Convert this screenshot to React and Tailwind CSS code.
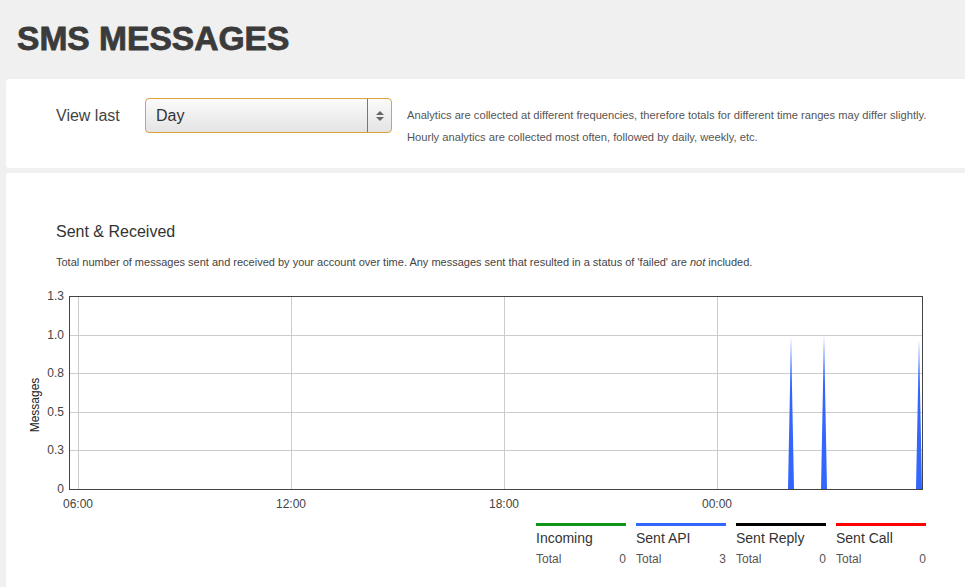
import React from "react";

const yTicks = [
    { label: "1.3", y: 11 },
    { label: "1.0", y: 50 },
    { label: "0.8", y: 88 },
    { label: "0.5", y: 127 },
    { label: "0.3", y: 165 },
    { label: "0", y: 204 },
];

const xTicks = [
    { label: "06:00", x: 72 },
    { label: "12:00", x: 285 },
    { label: "18:00", x: 498 },
    { label: "00:00", x: 711 },
];

const spikes = [
    { x: 785, top: 52 },
    { x: 818, top: 50 },
    { x: 913, top: 55 },
];

const series = [
    { name: "Incoming", color: "bg-[#109618]", total: 0 },
    { name: "Sent API", color: "bg-[#3366ff]", total: 3 },
    { name: "Sent Reply", color: "bg-black", total: 0 },
    { name: "Sent Call", color: "bg-[#ff0000]", total: 0 },
];

const Chart = () => (
    <svg width="940" height="230" className="block" fontFamily="'Liberation Sans', Arial, sans-serif">
        <rect x="63" y="11" width="853" height="193" fill="#fff" />
        {yTicks.slice(1, 5).map((t) => (
            <line key={t.label} x1="63" x2="916" y1={t.y + 0.5} y2={t.y + 0.5} stroke="#cccccc" strokeWidth="1" />
        ))}
        {xTicks.map((t) => (
            <line key={t.label} x1={t.x + 0.5} x2={t.x + 0.5} y1="11" y2="204" stroke="#cccccc" strokeWidth="1" />
        ))}
        {spikes.map((s) => (
            <polygon key={s.x} points={`${s.x - 3},204 ${s.x},${s.top} ${s.x + 3},204`} fill="#3366ff" />
        ))}
        <rect x="63.5" y="11.5" width="853" height="193" fill="none" stroke="#444" strokeWidth="1" />
        {yTicks.map((t) => (
            <text key={t.label} x="58" y={t.y + 1} textAnchor="end" dominantBaseline="middle" fontSize="12" fill="#444">
                {t.label}
            </text>
        ))}
        {xTicks.map((t) => (
            <text key={t.label} x={t.x} y="220" textAnchor="middle" dominantBaseline="middle" fontSize="12" fill="#444">
                {t.label}
            </text>
        ))}
        <text x="30" y="120" transform="rotate(-90 30 120)" textAnchor="middle" dominantBaseline="middle" fontSize="12" fill="#222">
            Messages
        </text>
    </svg>
);

const App = () => {
    return (
        <div className="min-h-[587px] bg-[#f0f0f0] font-['Liberation_Sans',Arial,sans-serif] overflow-hidden">
            <h1 className="pl-[17px] pt-[22px] pb-[23px] text-[33.6px] leading-[34px] font-bold text-[#3b3b3b] [-webkit-text-stroke:0.8px_#3b3b3b]">
                SMS MESSAGES
            </h1>

            <section className="ml-[6px] h-[89px] bg-white rounded-l-[3px] flex items-start pl-[50px] pt-[19px]">
                <div className="w-[89px] h-[35px] flex items-center text-[16px] text-[#444]">View last</div>
                <div className="w-[247px] h-[35px] rounded-[4px] border border-[#dda23c] bg-gradient-to-b from-[#fbfbfb] to-[#e4e4e4] flex items-center">
                    <span className="flex-1 pl-[10px] text-[16px] text-[#333]">Day</span>
                    <span className="w-[24px] h-full border-l border-[#777] flex flex-col items-center justify-center gap-[2px]">
                        <span className="w-0 h-0 border-l-[4px] border-r-[4px] border-b-[4px] border-l-transparent border-r-transparent border-b-[#666]" />
                        <span className="w-0 h-0 border-l-[4px] border-r-[4px] border-t-[4px] border-l-transparent border-r-transparent border-t-[#666]" />
                    </span>
                </div>
                <div className="ml-[15px] mt-[6px] text-[11.15px] leading-[22px] text-[#555]">
                    <p>Analytics are collected at different frequencies, therefore totals for different time ranges may differ slightly.</p>
                    <p>Hourly analytics are collected most often, followed by daily, weekly, etc.</p>
                </div>
            </section>

            <section className="ml-[6px] mt-[5px] h-[420px] bg-white rounded-l-[3px] pt-[49px]">
                <h2 className="pl-[50px] text-[16px] leading-[20px] text-[#333]">Sent &amp; Received</h2>
                <p className="pl-[50px] mt-[13px] text-[11px] leading-[14px] text-[#444]">
                    Total number of messages sent and received by your account over time. Any messages sent that resulted in a status of 'failed' are <em>not</em> included.
                </p>
                <div className="mt-[16px]">
                    <Chart />
                </div>
                <div className="ml-[530px] mt-[8px] flex gap-[10px]">
                    {series.map((s) => (
                        <div key={s.name} className="w-[90px]">
                            <div className={`h-[3px] ${s.color}`} />
                            <div className="mt-[3px] text-[14px] leading-[18px] text-[#333]">{s.name}</div>
                            <div className="mt-[4px] flex justify-between text-[12px] leading-[16px] text-[#555]">
                                <span>Total</span>
                                <span>{s.total}</span>
                            </div>
                        </div>
                    ))}
                </div>
            </section>
        </div>
    );
};

export default App;
